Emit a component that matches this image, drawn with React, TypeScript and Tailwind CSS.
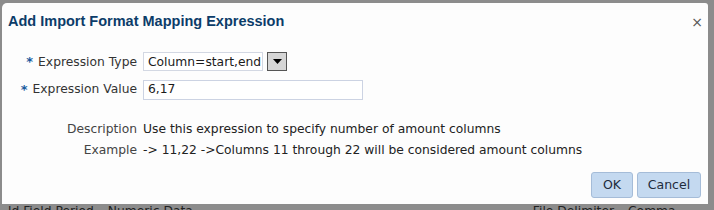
const font = "font-['DejaVu_Sans',Tahoma,sans-serif]";

function Required({ label }: { label: string }) {
  return (
    <div className="flex items-center justify-end gap-[5px] text-[12.3px] text-[#333333]">
      <span className="text-[#1a5b9e] font-bold text-[13px]">*</span>
      <span>{label}</span>
    </div>
  );
}

export default function App() {
  return (
    <div className={`w-[714px] h-[210px] bg-[#8c8c8c] overflow-hidden ${font}`}>
      <div className="ml-[2px] mt-[3px] w-[706px] h-[201px] bg-[#fdfdfd] rounded-tl-[5px] rounded-tr-[3px] flex flex-col">
        {/* title bar */}
        <div className="flex items-center justify-between pl-[6px] pr-[5px] pt-[7px] h-[31px]">
          <div className="font-['Liberation_Sans',Arial,sans-serif] text-[14.5px] font-bold text-[#0c3c69]">
            Add Import Format Mapping Expression
          </div>
          <span className="text-[14px] text-[#555] leading-none">×</span>
        </div>

        {/* form */}
        <div className="grid grid-cols-[135px_1fr] gap-x-[6px] mt-[18px] items-center text-[12.3px] text-[#333333]">
          <Required label="Expression Type" />
          <div className="flex items-center gap-[4px] h-[19px]">
            <div className="h-[19px] w-[120px] border border-[#d3d8e3] bg-white px-[4px] flex items-center text-[#1b1b1b] whitespace-nowrap">
              Column=start,end
            </div>
            <div className="h-[19px] w-[20px] border border-[#555] bg-[#d6d6d6] flex items-center justify-center">
              <svg width="9" height="5" viewBox="0 0 9 5">
                <path d="M0 0h9L4.5 5z" fill="#000" />
              </svg>
            </div>
          </div>

          <div className="mt-[8px]">
            <Required label="Expression Value" />
          </div>
          <div className="mt-[8px] h-[20px] w-[220px] border border-[#ccd3e3] bg-white px-[4px] flex items-center text-[#1b1b1b]">
            6,17
          </div>

          <div className="mt-[20px] text-right text-[#444]">Description</div>
          <div className="mt-[20px] text-[#222]">Use this expression to specify number of amount columns</div>

          <div className="mt-[3px] text-right text-[#444]">Example</div>
          <div className="mt-[3px] text-[#222]">-&gt; 11,22 -&gt;Columns 11 through 22 will be considered amount columns</div>
        </div>

        {/* buttons */}
        <div className="flex justify-end gap-[4px] pr-[7px] mt-[13px]">
          <button className="h-[26px] w-[42px] rounded-[3px] border border-[#a5bcd8] bg-[#c4d9f0] text-[12.5px] text-[#1e2c3c]">OK</button>
          <button className="h-[26px] w-[64px] rounded-[3px] border border-[#a5bcd8] bg-[#c4d9f0] text-[12.5px] text-[#1e2c3c]">Cancel</button>
        </div>
      </div>

      {/* underlying page, cut off */}
      <div className="h-[6px] overflow-hidden flex text-[12.3px] text-[#222] leading-[14px] whitespace-nowrap">
        <span className="pl-[8px]">ld Field Period</span>
        <span className="pl-[14px]">Numeric Data</span>
        <span className="ml-[340px]">File Delimiter</span>
        <span className="pl-[14px]">Comma</span>
      </div>
    </div>
  );
}
